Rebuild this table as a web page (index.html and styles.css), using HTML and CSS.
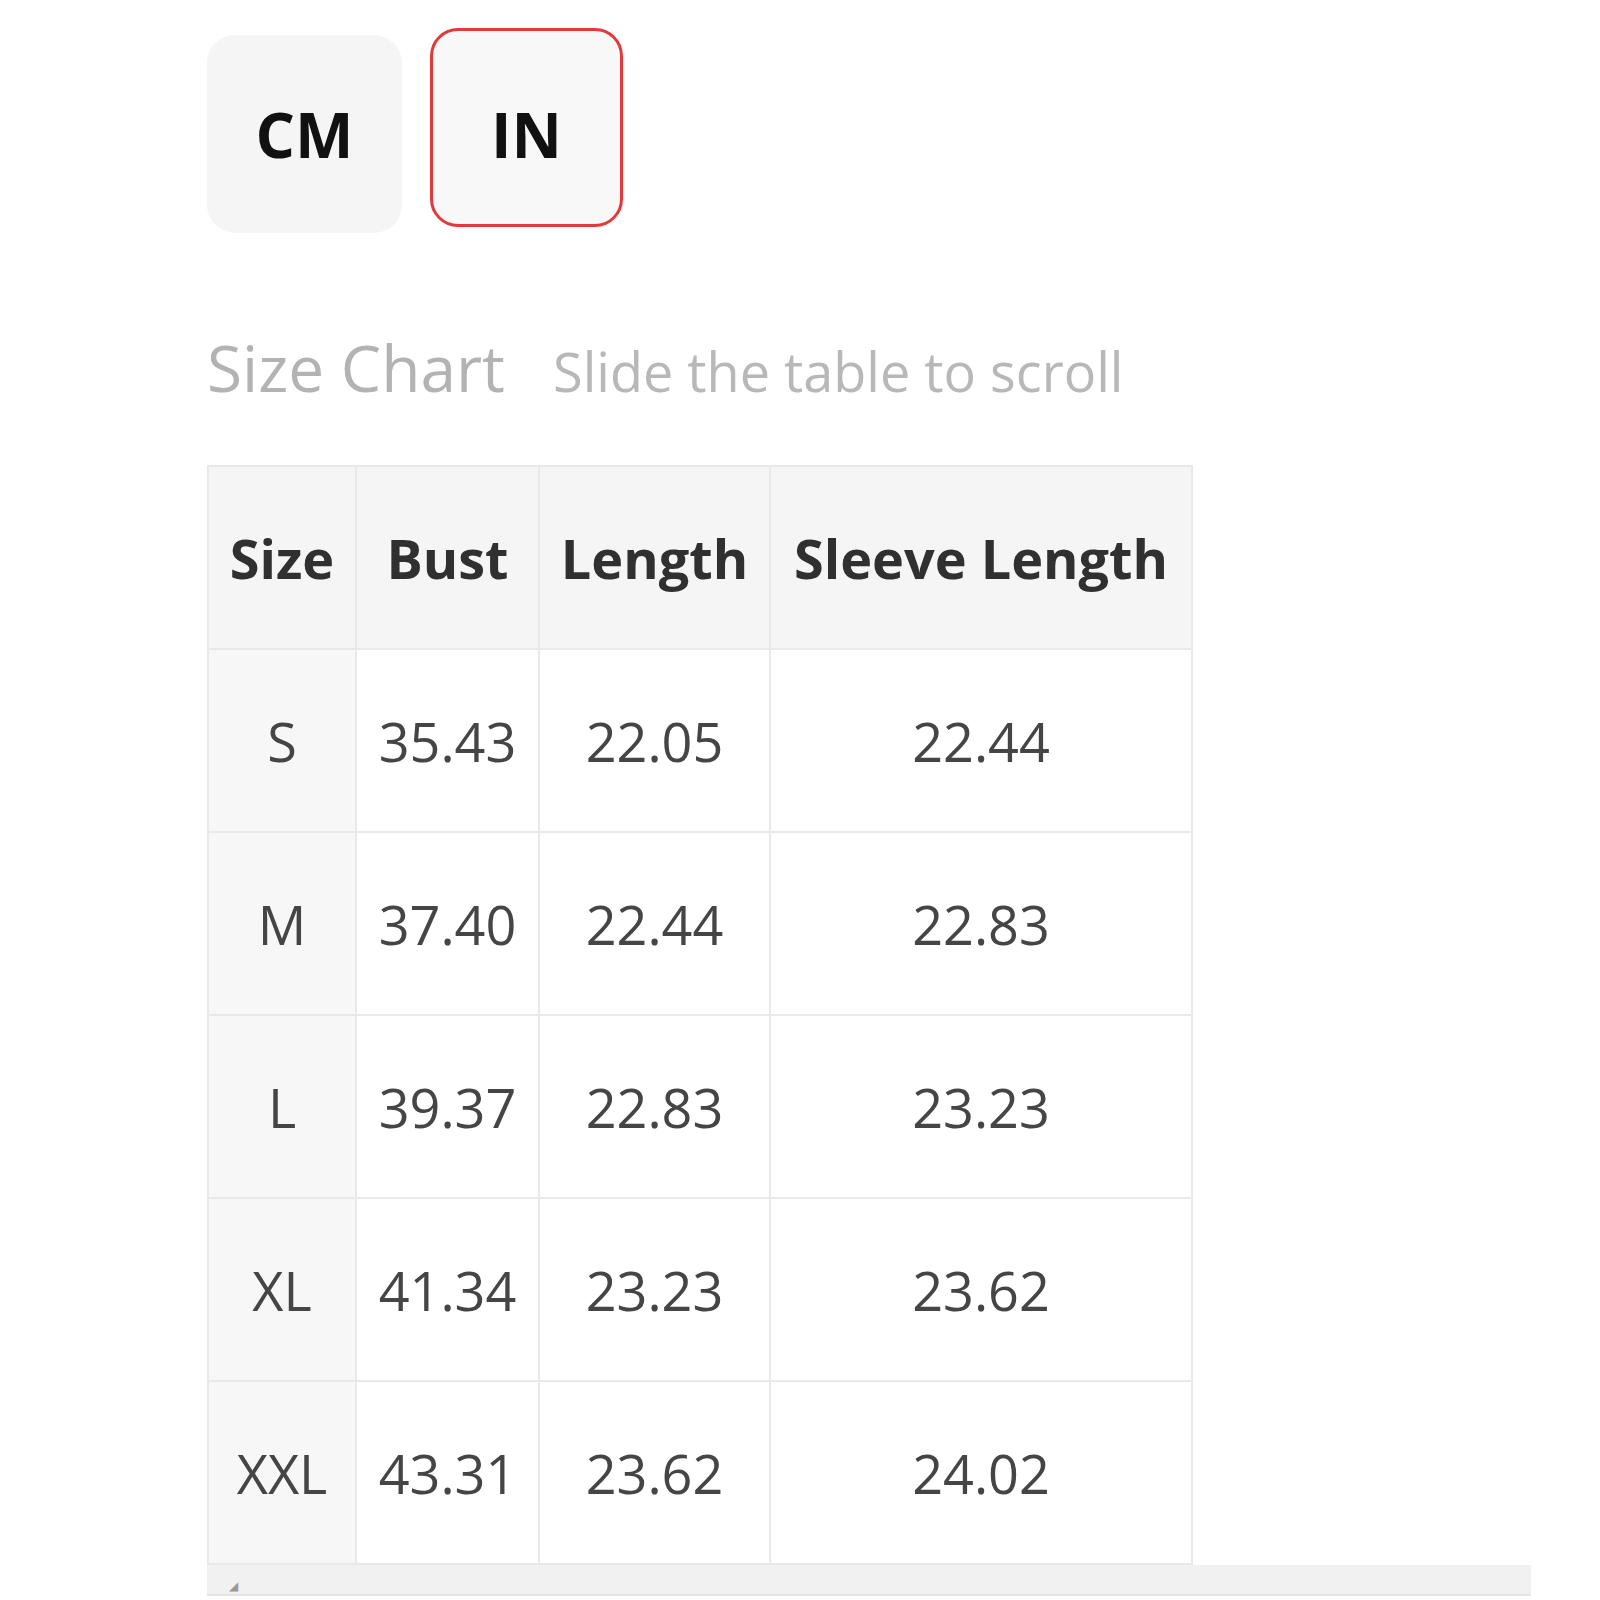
FILE: index.html
```html
<!DOCTYPE html>
<html lang="en">
<head>
    <meta charset="UTF-8">
    <meta name="viewport" content="width=device-width, initial-scale=1.0">
    <title>Size Chart</title>
    <link rel="stylesheet" href="styles.css">
</head>
<body>

    <div class="page">
        <div class="unit-switch">
            <button class="unit-btn unit-cm">CM</button>
            <button class="unit-btn unit-in active">IN</button>
        </div>

        <div class="chart-title">
            <span class="title-main">Size Chart</span>
            <span class="title-hint">Slide the table to scroll</span>
        </div>

        <div class="table-scroll">
            <table class="size-table">
                <colgroup>
                    <col class="col-size">
                    <col class="col-bust">
                    <col class="col-length">
                    <col class="col-sleeve">
                </colgroup>
                <thead>
                    <tr>
                        <th>Size</th>
                        <th>Bust</th>
                        <th>Length</th>
                        <th>Sleeve Length</th>
                    </tr>
                </thead>
                <tbody>
                    <tr><td>S</td><td>35.43</td><td>22.05</td><td>22.44</td></tr>
                    <tr><td>M</td><td>37.40</td><td>22.44</td><td>22.83</td></tr>
                    <tr><td>L</td><td>39.37</td><td>22.83</td><td>23.23</td></tr>
                    <tr><td>XL</td><td>41.34</td><td>23.23</td><td>23.62</td></tr>
                    <tr><td>XXL</td><td>43.31</td><td>23.62</td><td>24.02</td></tr>
                </tbody>
            </table>
            <div class="scroll-track"><span class="scroll-arrow">&#9698;</span></div>
        </div>
    </div>

</body>
</html>
```

FILE: styles.css
```css
body {
    margin: 0;
    background: #fff;
    font-family: "Open Sans", "Liberation Sans", sans-serif;
}
.page {
    padding: 28px 0 0 207px;
}

/* Unit switch */
.unit-switch {
    display: flex;
    align-items: flex-start;
    gap: 28px;
}
.unit-btn {
    font-family: "Open Sans", "Liberation Sans", sans-serif;
    font-weight: 700;
    font-size: 62px;
    color: #111;
    background: #f5f5f5;
    border: 3px solid transparent;
    border-radius: 28px;
    width: 195px;
    height: 198px;
    padding: 0;
}
.unit-cm { margin-top: 7px; }
.unit-in { width: 193px; height: 199px; padding-top: 12px; }
.unit-btn.active {
    border-color: #e2393d;
    background: #f8f8f8;
}

/* Title */
.chart-title {
    margin-top: 95px;
    line-height: 80px;
    white-space: nowrap;
}
.title-main {
    font-size: 64px;
    color: #b3b3b3;
}
.title-hint {
    font-size: 54px;
    color: #b8b8b8;
    margin-left: 44px;
}

/* Table */
.table-scroll {
    margin-top: 39px;
    width: 1324px;
}
.size-table {
    border-collapse: collapse;
    width: 984px;
    table-layout: fixed;
}
.col-size { width: 148px; }
.col-bust { width: 183px; }
.col-length { width: 231px; }
.col-sleeve { width: 422px; }
.size-table th,
.size-table td {
    height: 181px;
    border: 2px solid #e9e9e9;
    text-align: center;
    padding: 0;
    white-space: nowrap;
}
.size-table th {
    background: #f5f5f5;
    color: #303030;
    font-weight: 700;
    font-size: 54px;
}
.size-table td {
    color: #454545;
    font-size: 54px;
}
.size-table td:first-child { background: #f7f7f7; }

.scroll-track {
    height: 29px;
    background: #f1f1f1;
    border-bottom: 2px solid #e4e4e4;
    position: relative;
}
.scroll-arrow {
    position: absolute;
    left: 22px;
    bottom: 2px;
    font-size: 12px;
    line-height: 12px;
    color: #999;
}
```
